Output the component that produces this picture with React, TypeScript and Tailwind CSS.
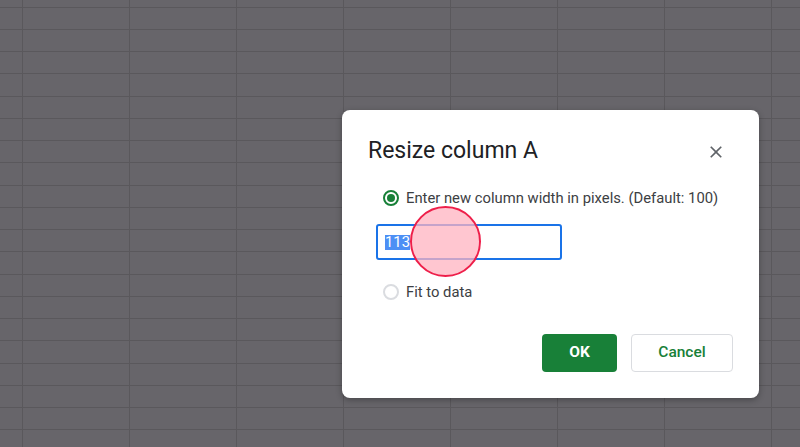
import { useState } from "react";

const COLS = 8;
const ROWS = 20;

function SheetGrid() {
  return (
    <div className="grid grid-cols-[23px_repeat(8,107px)] grid-rows-[7.5px_repeat(20,22.25px)]">
      {Array.from({ length: (COLS + 1) * (ROWS + 1) }).map((_, i) => (
        <div key={i} className="border-r border-b border-[#5a585c]" />
      ))}
    </div>
  );
}

function Radio({ checked }: { checked: boolean }) {
  return checked ? (
    <span className="flex size-4 items-center justify-center rounded-full border-2 border-[#188038]">
      <span className="size-2 rounded-full bg-[#188038]" />
    </span>
  ) : (
    <span className="size-4 rounded-full border-2 border-[#dadce0]" />
  );
}

export default function App() {
  const [mode, setMode] = useState<"pixels" | "fit">("pixels");
  const [width, setWidth] = useState("113");

  return (
    <div className="relative h-[447px] w-[800px] overflow-hidden bg-[#67656a] font-['Roboto',sans-serif]">
      <SheetGrid />

      <div className="absolute left-[342px] top-[110px] flex h-[288px] w-[417px] flex-col rounded-lg bg-white px-[26px] pb-[26px] pt-[27px] shadow-[0_2px_6px_rgba(0,0,0,0.3)]">
        <div className="flex h-7 items-center justify-between">
          <h2 className="text-[23px] leading-7 text-[#202124]">Resize column A</h2>
          <button className="mr-[7px] mt-[1px] text-[#5f6368]">
            <svg width="20" height="20" viewBox="0 0 24 24" fill="currentColor">
              <path d="M19 6.41 17.59 5 12 10.59 6.41 5 5 6.41 10.59 12 5 17.59 6.41 19 12 13.41 17.59 19 19 17.59 13.41 12z" />
            </svg>
          </button>
        </div>

        <label
          className="ml-[15px] mt-[23px] flex h-5 cursor-pointer items-center gap-[7px] text-[14.8px] text-[#3c4043]"
          onClick={() => setMode("pixels")}
        >
          <Radio checked={mode === "pixels"} />
          Enter new column width in pixels. (Default: 100)
        </label>

        <div className="ml-2 mt-4 flex h-9 w-[186px] items-center rounded-[3px] border-2 border-[#1a73e8] pl-[7px] text-[14.8px] text-[#202124]">
          <span className="bg-[#4d8ff5] leading-[15px] text-white">{width}</span>
          <input
            className="hidden"
            value={width}
            onChange={(e) => setWidth(e.target.value)}
          />
        </div>

        <label
          className="ml-[15px] mt-[22px] flex h-5 cursor-pointer items-center gap-[7px] text-[14.8px] text-[#3c4043]"
          onClick={() => setMode("fit")}
        >
          <Radio checked={mode === "fit"} />
          Fit to data
        </label>

        <div className="mt-auto flex justify-end gap-[14px]">
          <button className="h-[38px] w-[75px] rounded bg-[#188038] text-[15.5px] font-bold text-white">
            OK
          </button>
          <button className="h-[38px] w-[102px] rounded border border-[#dadce0] bg-white text-[15.5px] font-medium text-[#188038]">
            Cancel
          </button>
        </div>
      </div>

      {/* touch indicator */}
      <div className="absolute left-[410px] top-[206px] size-[71px] rounded-full border-2 border-[#ee1f4a] bg-[#ffb3c0]/75" />
    </div>
  );
}
